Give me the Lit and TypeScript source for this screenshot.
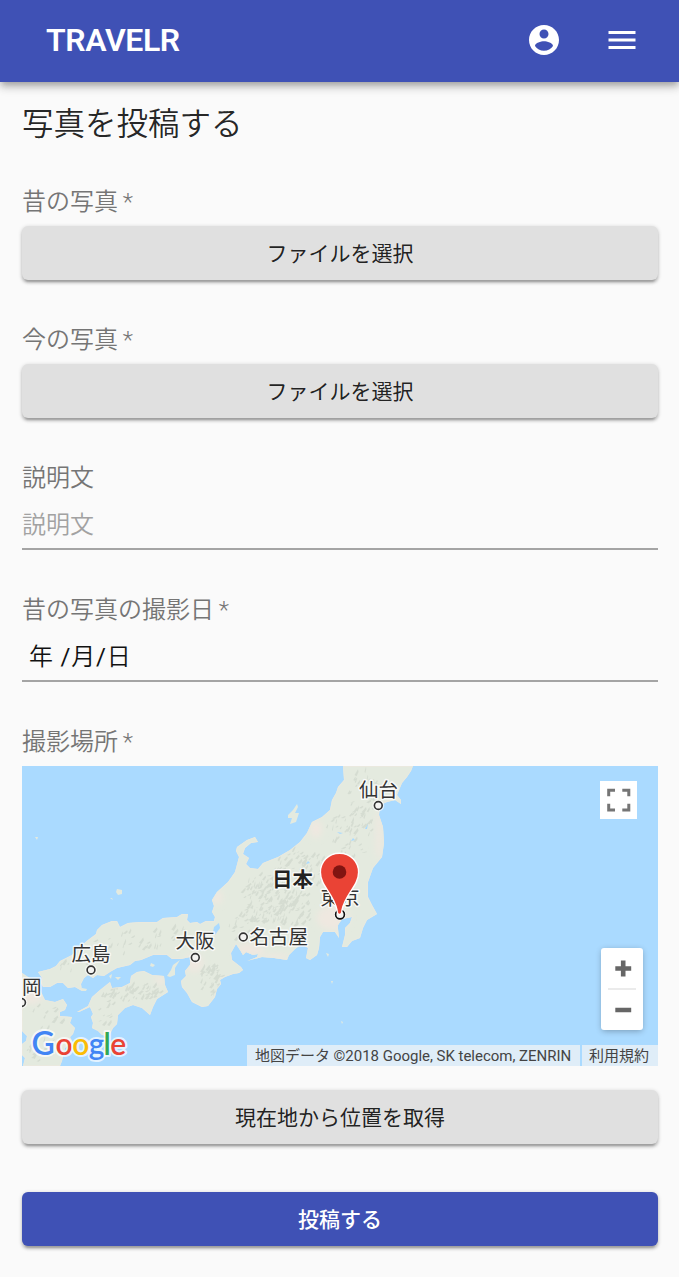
import { LitElement, html, svg, css } from "lit";
import { customElement, property } from "lit/decorators.js";

const HONSHU =
  "M343 766L344 780L338 787L336 793L332 800L330 810L322 817L312 822L307 833L300 842L290 850L278 857L263 863L258 869L250 868L246 864L249 858L243 854L245 848L251 843L258 842L255 837L247 840L237 847L236 851L239 857L235 872L228 882L217 892L212 900L214 906L212 912L215 917L214 921L206 921L200 924L197 922L190 923L187 920L188 914L182 914L177 917L163 918L157 922L140 922L128 923L120 927L117 921L112 921L102 925L97 930L96 934L88 940L80 947L72 955L60 961L56 966L50 969L38 972L42 978L41 983L43 987L50 987L57 983L63 983L68 988L75 987L82 991L81 984L84 978L88 975L93 978L97 975L104 976L110 972L117 968L130 965L135 961L141 960L153 955L167 955L172 959L181 959L190 957L190 965L185 971L186 976L181 981L182 987L187 993L192 1002L202 1007L208 1006L215 997L217 989L221 984L220 980L225 977L233 974L239 973L243 970L241 967L232 960L231 953L236 944L240 950L243 955L246 952L253 955L258 954L257 957L247 961L262 957L274 958L287 960L289 955L295 949L302 944L308 948L306 958L310 960L317 955L319 948L320 937L323 932L335 932L339 938L338 929L338 925L342 919L352 917L350 923L345 928L345 935L342 947L347 947L352 941L360 938L363 928L367 920L377 914L372 905L368 897L368 882L373 868L382 857L384 843L383 827L379 815L380 805L387 802L395 800L401 804L401 800L397 795L402 783L407 777L411 771L413 766Z";
const SHIKOKU =
  "M77 1012L88 1006L92 997L100 990L110 982L112 988L122 987L130 983L131 976L137 972L144 971L152 975L164 976L165 985L168 992L157 999L153 1007L150 1015L142 1008L133 1005L125 1008L118 1015L117 1024L113 1028L109 1036L102 1035L98 1031L92 1028L93 1023L91 1017L93 1014L90 1007L79 1012Z";
const KYUSHU =
  "M22 973L34 981L42 994L45 1000L55 1002L63 999L67 1005L65 1010L60 1012L60 1016L72 1017L70 1023L75 1028L73 1034L70 1037L72 1041L65 1048L62 1061L60 1066L23 1066L25 1058L22 1055L22 1044L26 1041L27 1036L22 1031Z";
const ISLANDS =
  "M297 804L293 810L288 815L288 818L292 818L290 824L296 822L299 813L295 813L298 807ZM180 960L173 965L171 970L167 976L170 977L175 975L175 968ZM117 889L122 890L122 894L118 895L116 892ZM35 837L38 837L37 840ZM151 963L155 965L153 967L150 966ZM82 988L87 989L86 991L82 991ZM326 953L329 954L328 957ZM331 981L333 981L332 984ZM341 1021L343 1022L342 1024ZM109 976L112 974L111 979ZM115 977L121 977L118 980ZM25 1055L22 1052L25 1050ZM110 898L112 898L113 900Z";

const MOUNTAINS: Array<[number, number, number, number, number]> = [
  [362, 800, 17, 30, 40],
  [350, 835, 26, 26, 50],
  [300, 873, 28, 24, 85],
  [264, 900, 25, 25, 120],
  [292, 912, 20, 15, 50],
  [239, 928, 13, 14, 18],
  [210, 980, 12, 16, 42],
  [167, 938, 26, 13, 18],
  [120, 945, 28, 14, 20],
  [77, 967, 18, 9, 10],
  [132, 993, 28, 9, 60],
  [105, 1010, 9, 18, 14],
  [45, 1020, 18, 15, 16],
  [42, 1050, 16, 13, 24],
];

function buildRidges(): string {
  let seed = 71;
  const next = () => (seed = (seed * 16807) % 2147483647) / 2147483647;
  let d = "";
  for (const [cx, cy, rx, ry, count] of MOUNTAINS) {
    for (let i = 0; i < count; i++) {
      const angle = next() * Math.PI * 2;
      const reach = Math.sqrt(next());
      const x = cx + Math.cos(angle) * rx * reach;
      const y = cy + Math.sin(angle) * ry * reach;
      const w = 1.5 + next() * 5.5;
      const h = 1 + next() * 5;
      d += `M${x.toFixed(1)} ${y.toFixed(1)}l${(w * 0.7).toFixed(1)} ${(-h).toFixed(1)}l${(w * 0.1).toFixed(1)} ${(h * 0.5).toFixed(1)}l${(-w * 0.4).toFixed(1)} ${(h * 0.7).toFixed(1)}z`;
    }
  }
  return d;
}
const RIDGES = buildRidges();

interface City {
  name: string;
  x: number;
  y: number;
  dotX: number;
  dotY: number;
}
const CITIES: City[] = [
  { name: "仙台", x: 359, y: 796.5, dotX: 378.3, dotY: 805.5 },
  { name: "東京", x: 320.5, y: 904.5, dotX: 340, dotY: 914.5 },
  { name: "名古屋", x: 249.5, y: 943.5, dotX: 243.3, dotY: 937 },
  { name: "大阪", x: 175.5, y: 948, dotX: 195.3, dotY: 957.5 },
  { name: "広島", x: 71.5, y: 960.5, dotX: 91, dotY: 970 },
  { name: "岡", x: 22, y: 993.5, dotX: 21.5, dotY: 1002.5 },
];

@customElement("location-map")
class LocationMap extends LitElement {
  static styles = css`
    :host { display: block; position: relative; height: 300px; overflow: hidden; background: #aadaff; }
    .map { display: block; width: 636px; height: 300px; }
    .city { font: 19.5px "Noto Sans CJK JP", sans-serif; fill: #333; stroke: #fff; stroke-opacity: 0.75; stroke-width: 3px; stroke-linejoin: round; paint-order: stroke; }
    .country { font-size: 20.5px; font-weight: 700; fill: #222; }
    .logo { font: 600 30px Lato, sans-serif; stroke: #fff; stroke-opacity: 0.7; stroke-width: 4px; stroke-linejoin: round; paint-order: stroke; }
    .capital { font-size: 32px; }
    .blue { fill: #4285f4; }
    .red { fill: #ea4335; }
    .yellow { fill: #fbbc05; }
    .green { fill: #34a853; }
    .fullscreen { position: absolute; top: 15px; right: 21px; width: 37px; height: 38px; background: #fff; }
    .fullscreen svg, .zoom svg { display: block; }
    .zoom { position: absolute; top: 182px; right: 15px; width: 42px; height: 82px; background: #fff; border-radius: 3px; box-shadow: 0 1.5px 6px -1px rgba(0, 0, 0, 0.3); }
    .legal { position: absolute; right: 0; bottom: 0; display: flex; gap: 2px; font: 15px/23px Roboto, "Noto Sans CJK JP", sans-serif; color: #444; white-space: nowrap; }
    .legal span { height: 21px; box-sizing: border-box; background: rgba(245, 245, 245, 0.7); }
    .credit { width: 333px; padding-left: 8px; letter-spacing: -0.02px; }
    .terms { width: 76px; padding-left: 7px; }
  `;

  render() {
    return html`
      <svg class="map" viewBox="22 766 636 300">
        <defs>
          <clipPath id="land"><path d="${HONSHU}${SHIKOKU}${KYUSHU}" /></clipPath>
          <filter id="soft"><feGaussianBlur stdDeviation="0.5" /></filter>
          <filter id="haze"><feGaussianBlur stdDeviation="3" /></filter>
        </defs>
        <path d="${HONSHU}${SHIKOKU}${KYUSHU}${ISLANDS}" fill="#e4eadf" />
        <g clip-path="url(#land)">
          <g fill="#efe8e0" filter="url(#haze)">
            <ellipse cx="333" cy="918" rx="16" ry="12" />
            <ellipse cx="250" cy="950" rx="14" ry="7" />
            <ellipse cx="194" cy="963" rx="9" ry="9" />
            <ellipse cx="275" cy="957" rx="14" ry="3" />
            <ellipse cx="379" cy="835" rx="3" ry="25" />
            <ellipse cx="316" cy="829" rx="6" ry="9" />
            <ellipse cx="217" cy="897" rx="5" ry="7" />
            <ellipse cx="161" cy="980" rx="6" ry="4" />
            <ellipse cx="31" cy="995" rx="12" ry="9" />
          </g>
          <path d="${RIDGES}" fill="#cbd3c9" opacity="0.6" filter="url(#soft)" />
          <path d="${HONSHU}${SHIKOKU}${KYUSHU}" fill="none" stroke="#ebe9df" stroke-width="1.4" />
          <path d="M219 923L220 928L215 935L213 932L214 927Z" fill="#aadaff" />
          <path d="M351 841l2-3 2 2zM337 832l6 1-3 1zM365 829l3-5-1 5zM306 864l2-3 2 2z" fill="#aadaff" />
        </g>
        ${CITIES.map(
          (c) => svg`
            <circle cx=${c.dotX} cy=${c.dotY} r="4" fill="#fff" stroke="#fff" stroke-opacity="0.6" stroke-width="4" />
            <circle cx=${c.dotX} cy=${c.dotY} r="3.9" fill="#f4f4f2" stroke="#333" stroke-width="1.6" />
            <text class="city" x=${c.x} y=${c.y}>${c.name}</text>`
        )}
        <text class="city country" x="272" y="886.5">日本</text>
        <circle cx="340" cy="914.5" r="4.4" fill="#f4f4f2" stroke="#111" stroke-width="1.6" />
        <path
          d="M339.5 853.2C328.6 853.2 320.4 861.8 320.4 872.2C320.4 886 334 894 337 910Q337.3 914.5 339.5 914.5Q341.7 914.5 342 910C345 894 358.6 886 358.6 872.2C358.6 861.8 350.4 853.2 339.5 853.2Z"
          fill="#ea4335" stroke="#fff" stroke-width="1.4"
        />
        <circle cx="339.5" cy="872" r="6.8" fill="#811411" />
        <text class="logo" x="31.5 55.5 72.2 88.8 103.6 110.2" y="1055"><tspan class="blue capital">G</tspan><tspan class="red">o</tspan><tspan class="yellow">o</tspan><tspan class="blue">g</tspan><tspan class="green">l</tspan><tspan class="red">e</tspan></text>
      </svg>
      <div class="fullscreen">
        <svg width="37" height="38" viewBox="0 0 37 38" fill="none" stroke="#757575" stroke-width="3">
          <path d="M8.7 15.3V9.2H15M22.3 9.2H28.8V15.3M28.8 22.7V29H22.3M15 29H8.7V22.7" />
        </svg>
      </div>
      <div class="zoom">
        <svg width="42" height="82" viewBox="0 0 42 82">
          <path d="M14.3 20.5H30.2M22.2 12.5V28.5M14.3 62H30.2" stroke="#666" stroke-width="4.6" />
          <path d="M7 41H35" stroke="#e6e6e6" stroke-width="1.6" />
        </svg>
      </div>
      <div class="legal">
        <span class="credit">地図データ ©2018 Google, SK telecom, ZENRIN</span>
        <span class="terms">利用規約</span>
      </div>
    `;
  }
}

@customElement("form-field")
class FormField extends LitElement {
  @property() label = "";

  static styles = css`
    :host { display: block; }
    .label { height: 42px; font-size: 24px; line-height: 36px; font-weight: 350; word-spacing: -1px; color: #757575; }
  `;

  render() {
    return html`<div class="label">${this.label}</div><slot></slot>`;
  }
}

@customElement("app-root")
class AppRoot extends LitElement {
  static styles = css`
    :host { display: block; min-height: 1277px; background: #fafafa; color: rgba(0, 0, 0, 0.87); font-family: Roboto, "Noto Sans CJK JP DemiLight", "Noto Sans CJK JP", sans-serif; }
    .bar { position: relative; box-sizing: border-box; height: 82px; padding: 0 39px 0 46px; display: flex; align-items: center; background: #3f51b5; color: #fff; box-shadow: 0 3px 6px -1.5px rgba(0, 0, 0, 0.2), 0 6px 7.5px rgba(0, 0, 0, 0.14), 0 1.5px 15px rgba(0, 0, 0, 0.12); }
    .brand { flex: 1; font-size: 32px; font-weight: 600; letter-spacing: -0.4px; line-height: 40px; padding-bottom: 2px; }
    .bar svg { display: block; fill: currentColor; margin-bottom: 2px; }
    .account { margin-right: 42px; }
    .page { padding: 19px 21px 31px 22px; }
    .title { margin: 0; font-size: 31.5px; line-height: 48px; font-weight: 350; }
    .form { display: grid; gap: 42px; padding-top: 35px; }
    .button { display: block; width: 100%; height: 54px; padding: 0; border: 0; border-radius: 6px; background: #e0e0e0; color: rgba(0, 0, 0, 0.87); font: 400 21px/56px Roboto, "Noto Sans CJK JP", sans-serif; text-align: center; box-shadow: 0 1.5px 4.5px rgba(0, 0, 0, 0.2), 0 3px 3px rgba(0, 0, 0, 0.14), 0 4.5px 1.5px -3px rgba(0, 0, 0, 0.12); }
    .primary { background: #3f51b5; color: #fff; font-weight: 500; }
    .input { box-sizing: border-box; height: 48px; border-bottom: 2px solid #a4a4a4; font-size: 24px; line-height: 46px; white-space: pre; }
    .placeholder { color: #a2a2a2; font-weight: 350; }
    .date { padding-left: 7px; letter-spacing: 0.8px; color: #111; }
    .actions { display: grid; gap: 48px; padding-top: 24px; }
  `;

  render() {
    return html`
      <header class="bar">
        <div class="brand">TRAVELR</div>
        <svg class="account" width="36" height="36" viewBox="0 0 24 24"><path d="M12 2C6.48 2 2 6.48 2 12s4.48 10 10 10 10-4.48 10-10S17.52 2 12 2zm0 3c1.66 0 3 1.34 3 3s-1.34 3-3 3-3-1.34-3-3 1.34-3 3-3zm0 14.2c-2.5 0-4.71-1.28-6-3.22.03-1.99 4-3.08 6-3.08 1.99 0 5.97 1.09 6 3.08-1.29 1.94-3.5 3.22-6 3.22z" /></svg>
        <svg width="36" height="36" viewBox="0 0 24 24"><path d="M3 18h18v-2H3v2zm0-5h18v-2H3v2zm0-7v2h18V6H3z" /></svg>
      </header>
      <main class="page">
        <h1 class="title">写真を投稿する</h1>
        <div class="form">
          <form-field label="昔の写真 *"><button class="button">ファイルを選択</button></form-field>
          <form-field label="今の写真 *"><button class="button">ファイルを選択</button></form-field>
          <form-field label="説明文"><div class="input placeholder">説明文</div></form-field>
          <form-field label="昔の写真の撮影日 *"><div class="input date">年 /月/日</div></form-field>
          <form-field label="撮影場所 *"><location-map></location-map></form-field>
        </div>
        <div class="actions">
          <button class="button">現在地から位置を取得</button>
          <button class="button primary">投稿する</button>
        </div>
      </main>
    `;
  }
}
